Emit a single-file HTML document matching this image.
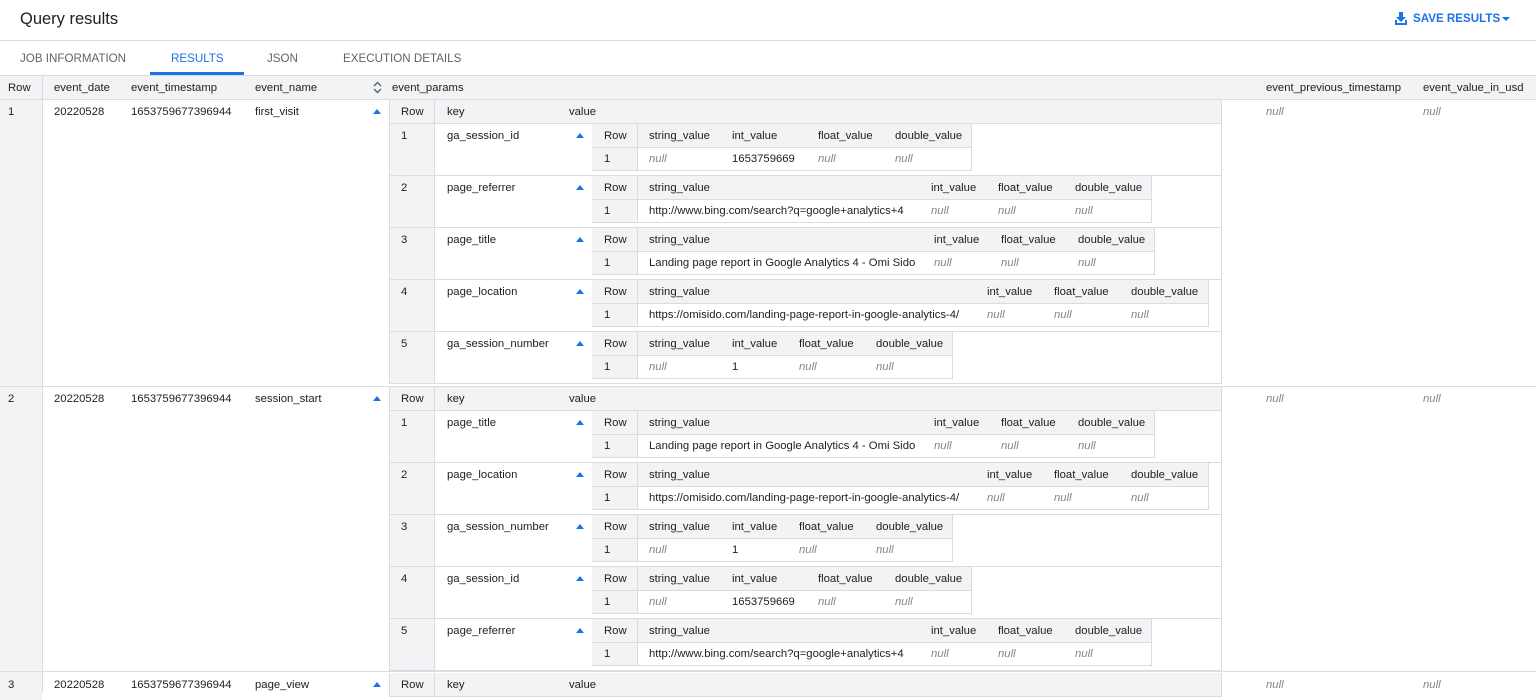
<!DOCTYPE html>
<html><head><meta charset="utf-8"><style>
*{box-sizing:border-box;margin:0;padding:0}
body{width:1536px;height:692px;overflow:hidden;background:#fff;font-family:"Liberation Sans",Arial,sans-serif;color:#202124;font-size:11.3px;position:relative}
.a{position:absolute}
.t{position:absolute;white-space:nowrap;line-height:23px;font-size:11.3px}
.n{font-style:italic;color:#80868b}
.g{position:absolute;background:#f1f3f4}
.hl{position:absolute;height:1px;background:#dadce0}
.vl{position:absolute;width:1px;background:#dadce0}
.arr{position:absolute;width:0;height:0;border-left:4px solid transparent;border-right:4px solid transparent;border-bottom:5px solid #1a73e8}
.tab{position:absolute;top:52px;font-size:11.6px;color:#5f6368;letter-spacing:0}
</style></head><body>
<div class="t" style="left:20px;top:7px;font-size:16.5px;line-height:24px">Query results</div>
<svg class="a" style="left:1395px;top:12px" width="12" height="13" viewBox="0 0 12 13"><path d="M4 0h4v5h3L6 10 1 5h3z" fill="#1a73e8"/><path d="M0 8v5h12V8h-2v3H2V8z" fill="#1a73e8"/></svg>
<div class="t" style="left:1413px;top:7px;color:#1a73e8;font-size:11.6px;font-weight:bold">SAVE RESULTS</div>
<div class="a" style="left:1502px;top:17px;border-left:4px solid transparent;border-right:4px solid transparent;border-top:4px solid #1a73e8"></div>
<div class="hl" style="left:0;top:40px;width:1536px"></div>
<div class="tab" style="left:20px">JOB INFORMATION</div>
<div class="tab" style="left:171px;color:#1a73e8">RESULTS</div>
<div class="tab" style="left:267px">JSON</div>
<div class="tab" style="left:343px">EXECUTION DETAILS</div>
<div class="a" style="left:150px;top:72px;width:94px;height:3px;background:#1a73e8"></div>
<div id="root"></div>
<script>
var h='';
function g(x,y,w,hh){h+='<div class="g" style="left:'+x+'px;top:'+y+'px;width:'+w+'px;height:'+hh+'px"></div>';}
function hl(x,y,w){h+='<div class="hl" style="left:'+x+'px;top:'+y+'px;width:'+w+'px"></div>';}
function vl(x,y,hh){h+='<div class="vl" style="left:'+x+'px;top:'+y+'px;height:'+hh+'px"></div>';}
function t(x,y,s,c){h+='<div class="t'+(c?' n':'')+'" style="left:'+x+'px;top:'+(y+1)+'px">'+s+'</div>';}
function ar(x,y){h+='<div class="arr" style="left:'+x+'px;top:'+y+'px"></div>';}
g(0,76,1536,24);hl(0,75,1536);hl(0,99,1536);vl(42,76,616);
t(8,76,'Row');t(54,76,'event_date');t(131,76,'event_timestamp');t(255,76,'event_name');
h+='<svg class="a" style="left:373px;top:81px" width="9" height="13" viewBox="0 0 9 13"><path d="M1 5L4.5 1.5 8 5M1 8l3.5 3.5L8 8" fill="none" stroke="#5f6368" stroke-width="1.4"/></svg>';
t(392,76,'event_params');t(1266,76,'event_previous_timestamp');t(1423,76,'event_value_in_usd');
g(0,100,42,600);
var S={id:[732,818,895,971,'1653759669'],ref:[931,998,1075,1151,null],title:[934,1001,1078,1154,null],loc:[987,1054,1131,1208,null],num:[732,799,876,952,'1']};
var SV={id:null,ref:'http://www.bing.com/search?q=google+analytics+4',title:'Landing page report in Google Analytics 4 - Omi Sido',loc:'https://omisido.com/landing-page-report-in-google-analytics-4/',num:null};
var KEY={id:'ga_session_id',ref:'page_referrer',title:'page_title',loc:'page_location',num:'ga_session_number'};
function block(y,i,k){
 var c=S[k];
 g(389,y,45,51);vl(434,y,51);
 t(401,y,i);t(447,y,KEY[k]);ar(576,y+9);
 g(592,y,c[3]-592,23);g(592,y+23,45,23);
 hl(592,y+23,c[3]-592);hl(592,y+46,c[3]-592);vl(637,y,47);vl(c[3],y,47);
 t(604,y,'Row');t(649,y,'string_value');t(c[0],y,'int_value');t(c[1],y,'float_value');t(c[2],y,'double_value');
 t(604,y+23,'1');
 if(SV[k])t(649,y+23,SV[k]);else t(649,y+23,'null',1);
 if(c[4])t(c[0],y+23,c[4]);else t(c[0],y+23,'null',1);
 t(c[1],y+23,'null',1);t(c[2],y+23,'null',1);
 hl(389,y+51,832);
}
function row(y,n,name,keys){
 t(8,y,n);t(54,y,'20220528');t(131,y,'1653759677396944');t(255,y,name);ar(373,y+9);
 t(1266,y,'null',1);t(1423,y,'null',1);
 g(389,y,832,23);hl(389,y+23,832);vl(434,y,23);
 t(401,y,'Row');t(447,y,'key');t(569,y,'value');
 var yy=y+24;
 for(var i=0;i<keys.length;i++){block(yy,i+1,keys[i]);yy+=52;}
 vl(389,y,yy-y);vl(1221,y,yy-y);
 return yy;
}
row(100,'1','first_visit',['id','ref','title','loc','num']);
hl(0,386,1536);
row(387,'2','session_start',['title','loc','num','id','ref']);
hl(0,671,1536);
row(673,'3','page_view',[]);
document.getElementById('root').innerHTML=h;
</script>
</body></html>
